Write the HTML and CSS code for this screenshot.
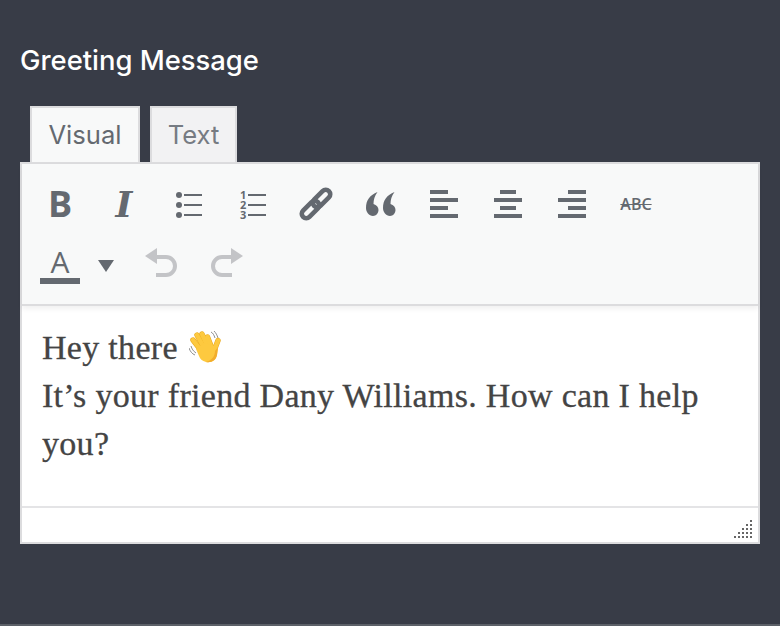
FILE: index.html
```html
<!DOCTYPE html>
<html lang="en">
<head>
<meta charset="utf-8">
<title>Greeting Message</title>
<link rel="stylesheet" href="styles.css">
</head>
<body>
<main class="panel">
  <h2 class="title">Greeting Message</h2>
  <div class="tabs">
    <button class="tab tab-active">Visual</button>
    <button class="tab">Text</button>
  </div>
  <section class="editor">
    <div class="toolbar">
      <div class="row">
        <span class="btn glyph-b">B</span>
        <span class="btn glyph-i">I</span>
        <span class="btn"><svg class="ic" viewBox="0 0 40 40"><g fill="#646970"><circle cx="11" cy="11" r="3"/><circle cx="11" cy="21" r="3"/><circle cx="11" cy="31" r="3"/><rect x="16" y="10" width="18" height="2"/><rect x="16" y="20" width="18" height="2"/><rect x="16" y="30" width="18" height="2"/></g></svg></span>
        <span class="btn"><svg class="ic" viewBox="0 0 40 40"><g fill="#646970"><text class="num" x="8" y="14.500">1</text><text class="num" x="8" y="24.500">2</text><text class="num" x="8" y="34.500">3</text><rect x="16" y="10" width="18" height="2"/><rect x="16" y="20" width="18" height="2"/><rect x="16" y="30" width="18" height="2"/></g></svg></span>
        <span class="btn"><svg class="ic" viewBox="0 0 40 40"><g fill="none" stroke="#646970" stroke-width="4.600"><rect x="-10.500" y="-4.500" width="21" height="9" rx="4.500" transform="translate(25.500 14.500) rotate(-45)"/><rect x="-10.500" y="-4.500" width="21" height="9" rx="4.500" transform="translate(14.500 25.500) rotate(-45)"/></g></svg></span>
        <span class="btn"><svg class="ic" viewBox="0 0 40 40"><g fill="#646970"><path d="M17.500 8C10 11 6 16 6 24c0 4 3 8 7 8 3 0 5.500-3 5.500-6 0-3-2-5-5-6 0-4 1-8 4-12z"/><path d="M34.500 8C27 11 23 16 23 24c0 4 3 8 7 8 3 0 5.500-3 5.500-6 0-3-2-5-5-6 0-4 1-8 4-12z"/></g></svg></span>
        <span class="btn"><svg class="ic" viewBox="0 0 40 40"><g fill="#646970"><rect x="6" y="6" width="18" height="4"/><rect x="6" y="14" width="28" height="4"/><rect x="6" y="22" width="18" height="4"/><rect x="6" y="30" width="28" height="4"/></g></svg></span>
        <span class="btn"><svg class="ic" viewBox="0 0 40 40"><g fill="#646970"><rect x="12" y="6" width="16" height="4"/><rect x="6" y="14" width="28" height="4"/><rect x="12" y="22" width="16" height="4"/><rect x="6" y="30" width="28" height="4"/></g></svg></span>
        <span class="btn"><svg class="ic" viewBox="0 0 40 40"><g fill="#646970"><rect x="16" y="6" width="18" height="4"/><rect x="6" y="14" width="28" height="4"/><rect x="16" y="22" width="18" height="4"/><rect x="6" y="30" width="28" height="4"/></g></svg></span>
        <span class="btn glyph-abc">ABC</span>
      </div>
      <div class="row">
        <span class="btn glyph-a"><span class="a-letter">A</span><span class="a-bar"></span></span>
        <span class="caret-box"><span class="caret"></span></span>
        <span class="btn btn-undo"><svg class="ic" viewBox="0 0 40 40"><path d="M16 13h10a9 9 0 0 1 0 18h-10" fill="none" stroke="#c3c4c7" stroke-width="4"/><path d="M5 12l12-8v16z" fill="#c3c4c7"/></svg></span>
        <span class="btn btn-redo"><svg class="ic ic-flip" viewBox="0 0 40 40"><path d="M16 13h10a9 9 0 0 1 0 18h-10" fill="none" stroke="#c3c4c7" stroke-width="4"/><path d="M5 12l12-8v16z" fill="#c3c4c7"/></svg></span>
      </div>
    </div>
    <div class="content">
      <p class="line">Hey there <svg class="wave" viewBox="0 0 32 32"><g fill="none" stroke="#8f8f8f" stroke-width="1"><path d="M22 1c2 1 3 3 4 6"/><path d="M25 0c2 2 3 4 4 7"/><path d="M0 17c1 3 3 6 6 7"/><path d="M2 15c1 3 2 5 5 7"/></g><g stroke-linecap="round"><g stroke="#e9a91f" stroke-width="5.400"><path d="M11 18L4 9"/><path d="M14 15L8 4"/><path d="M18 14L13 3"/><path d="M22 15L18.500 6"/><path d="M25 20L29 9.500"/></g><g stroke="#fdc93f" stroke-width="4.400"><path d="M11 18L4 9"/><path d="M14 15L8 4"/><path d="M18 14L13 3"/><path d="M22 15L18.500 6"/><path d="M25 20L29 9.500"/></g></g><path d="M7 18l8-6 8 2 6 3-1 7c-1 5-5 8-11 7-4-1-6-3-7-6z" fill="#fdc93f"/><path d="M29 16l-1 8c-1 5-5 8-11 7 6-2 9-6 9-11z" fill="#f2ad2c"/></svg></p>
      <p class="line">It’s your friend Dany Williams. How can I help you?</p>
    </div>
    <div class="statusbar"><svg class="grip" viewBox="0 0 18 18"><g fill="#666"><rect x="16" y="0" width="2" height="2"/><rect x="12" y="4" width="2" height="2"/><rect x="16" y="4" width="2" height="2"/><rect x="8" y="8" width="2" height="2"/><rect x="12" y="8" width="2" height="2"/><rect x="16" y="8" width="2" height="2"/><rect x="4" y="12" width="2" height="2"/><rect x="8" y="12" width="2" height="2"/><rect x="12" y="12" width="2" height="2"/><rect x="16" y="12" width="2" height="2"/><rect x="0" y="16" width="2" height="2"/><rect x="4" y="16" width="2" height="2"/><rect x="8" y="16" width="2" height="2"/><rect x="12" y="16" width="2" height="2"/><rect x="16" y="16" width="2" height="2"/></g></svg></div>
  </section>
</main>
</body>
</html>
```

FILE: styles.css
```css
* { box-sizing: border-box; }
html, body { margin: 0; height: 100%; }
body { background: #383c47; overflow: hidden; }
.panel { height: 100%; padding: 42px 20px 0; border-bottom: 2px solid #5c6068; }
.title {
  margin: 0;
  font: 500 27.400px/36px Inter, sans-serif;
  color: #fff;
}
.tabs { display: flex; gap: 10px; margin: 28px 0 0 10px; height: 56px; }
.tab {
  height: 56px;
  width: 87px;
  padding: 0;
  border: 2px solid #dcdcde;
  border-bottom: 0;
  background: #f2f2f3;
  color: #767b82;
  font: 400 25.600px/1 Inter, sans-serif;
}
.tab-active { width: 110px; background: #f8f9f9; color: #646970; }
.editor { width: 740px; height: 382px; border: 2px solid #dcdcde; background: #fff; display: flex; flex-direction: column; }
.toolbar {
  height: 142px;
  padding: 10px 0 0 6px;
  background: #f8f9f9;
  border-bottom: 2px solid #dcdcde;
  box-shadow: 0 3px 5px rgba(0,0,0,.06);
}
.row { display: flex; height: 60px; align-items: center; }
.btn { width: 64px; height: 60px; display: flex; align-items: center; justify-content: center; color: #646970; }
.ic { width: 40px; height: 40px; display: block; }
.ic-flip { transform: scaleX(-1); }
.num { font: 700 11px "Open Sans", sans-serif; }
.glyph-b { font: 700 36px/1 "Open Sans", sans-serif; }
.glyph-i { font: italic 700 36px/1 "DejaVu Serif", serif; }
.glyph-abc { font: 600 16px/1 "Open Sans", sans-serif; text-decoration: line-through; }
.glyph-a { position: relative; font: 500 30px/1 "Open Sans", sans-serif; }
.a-letter { margin-top: -4px; }
.a-bar { position: absolute; left: 12px; top: 44px; width: 40px; height: 6px; background: #646970; }
.caret-box { width: 28px; display: flex; justify-content: center; padding-top: 4px; }
.caret { width: 0; height: 0; border: 8px solid transparent; border-top: 12px solid #646970; border-bottom: 0; }
.btn-undo { margin-left: 8px; }
.btn-redo { margin-left: 4px; }
.content {
  flex: 1;
  padding: 18px 20px 0;
  font: 400 34px/48px "Liberation Serif", serif;
  letter-spacing: .3px;
  color: #444;
  -webkit-text-stroke: .3px #444;
}
.line { margin: 0; }
.wave { width: 32px; height: 32px; margin-left: 2px; vertical-align: -4px; }
.statusbar { height: 36px; border-top: 2px solid #e4e4e6; display: flex; align-items: flex-end; justify-content: flex-end; padding: 0 6px 4px 0; }
.grip { width: 18px; height: 18px; display: block; }
```
